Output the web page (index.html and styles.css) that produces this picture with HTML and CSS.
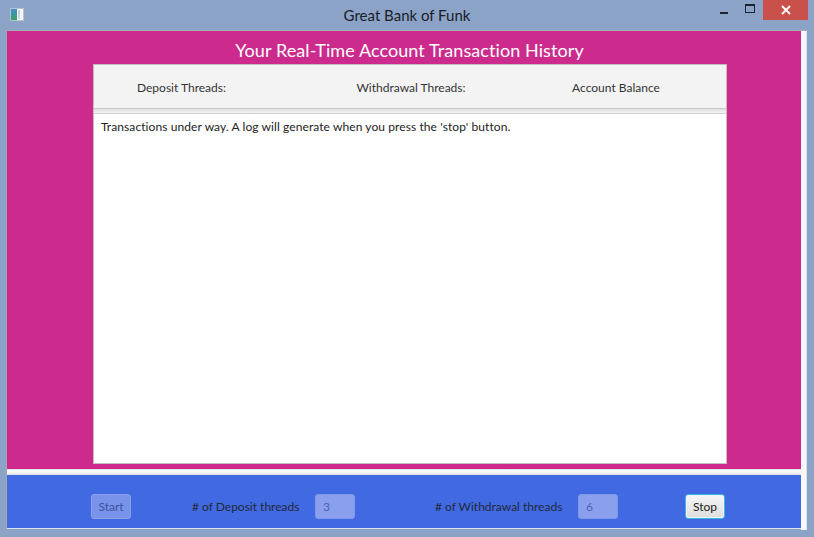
FILE: index.html
```html
<!DOCTYPE html>
<html>
<head>
<meta charset="utf-8">
<title>Great Bank of Funk</title>
<link rel="stylesheet" href="styles.css">
</head>
<body>
<div class="window">
  <div class="titlebar">
    <svg class="app-icon" width="14" height="13" viewBox="0 0 14 13">
      <rect x="0.5" y="0.5" width="13" height="12" fill="#f4f6f8" stroke="#b9c3cf"/>
      <defs><linearGradient id="g" x1="0" y1="0" x2="0" y2="1"><stop offset="0" stop-color="#3f8fd0"/><stop offset="1" stop-color="#3aa062"/></linearGradient></defs>
      <rect x="1" y="1" width="6" height="11" fill="url(#g)"/>
      <rect x="8" y="2" width="2" height="9" fill="#c9d1da"/>
    </svg>
    <div class="title">Great Bank of Funk</div>
    <div class="controls">
      <div class="ctl min"><span class="dash"></span></div>
      <div class="ctl max"><span class="box"></span></div>
      <div class="ctl close">
        <svg width="10" height="10" viewBox="0 0 10 10"><path d="M1 1 L9 9 M9 1 L1 9" stroke="#fff" stroke-width="1.8"/></svg>
      </div>
    </div>
  </div>
  <div class="client">
    <div class="scene">
      <div class="top-pane">
        <h1 class="heading">Your Real-Time Account Transaction History</h1>
        <div class="panel">
          <div class="header-row">
            <span class="hlabel">Deposit Threads:</span>
            <span class="hlabel">Withdrawal Threads:</span>
            <span class="hlabel">Account Balance</span>
          </div>
          <div class="divider"></div>
          <div class="log">Transactions under way. A log will generate when you press the 'stop' button.</div>
        </div>
      </div>
      <div class="split"></div>
      <div class="bottom-bar">
        <button class="btn disabled start">Start</button>
        <span class="flabel dep">&#35; of Deposit threads</span>
        <div class="field">3</div>
        <span class="flabel wd">&#35; of Withdrawal threads</span>
        <div class="field">6</div>
        <button class="btn stop">Stop</button>
      </div>
    </div>
    <div class="edge"></div>
  </div>
</div>
</body>
</html>
```
FILE: styles.css
```css
html, body {
  margin: 0;
  padding: 0;
}
body {
  width: 814px;
  height: 537px;
  overflow: hidden;
  font-family: "Segoe UI", Lato, "Open Sans", sans-serif;
}
.window {
  width: 814px;
  height: 537px;
  background: #8ba3c6;
  display: flex;
  flex-direction: column;
}
.titlebar {
  height: 30px;
  display: flex;
  align-items: flex-start;
  position: relative;
}
.app-icon {
  margin: 8px 0 0 10px;
}
.title {
  flex: 1;
  text-align: center;
  font-size: 15px;
  line-height: 30px;
  color: #1c1c28;
  padding-left: 79px;
}
.controls {
  display: flex;
  align-items: flex-start;
  margin-right: 6px;
}
.ctl {
  height: 20px;
  display: flex;
  align-items: center;
  justify-content: center;
}
.ctl.min {
  width: 26px;
}
.dash {
  width: 8px;
  height: 2px;
  background: #1c2233;
  margin-top: 5px;
}
.ctl.max {
  width: 26px;
}
.box {
  width: 8px;
  height: 6px;
  border: 1px solid #1c2233;
  border-top-width: 2px;
  margin-top: -4px;
}
.ctl.close {
  width: 45px;
  background: #c9504b;
}
.client {
  margin-left: 6px;
  width: 801px;
  height: 500px;
  display: flex;
  border-top: 1px solid #a7aab0;
  border-left: 1px solid #a2a6ad;
  box-sizing: border-box;
}
.scene {
  width: 795px;
  display: flex;
  flex-direction: column;
}
.edge {
  width: 5px;
  background: #f7f7f7;
  border-right: 1px solid #dfe3e8;
}
.top-pane {
  height: 438px;
  background: #cc2b8d;
  display: flex;
  flex-direction: column;
  align-items: flex-start;
}
.heading {
  margin: 0;
  width: 100%;
  text-align: center;
  font-weight: normal;
  font-size: 18px;
  letter-spacing: 0.08px;
  line-height: 24px;
  height: 33px;
  padding-top: 7px;
  padding-left: 11px;
  box-sizing: border-box;
  color: #fff;
}
.panel {
  margin-left: 86px;
  width: 634px;
  height: 400px;
  box-sizing: border-box;
  border: 1px solid #bfbfbf;
  background: #fff;
  display: flex;
  flex-direction: column;
}
.header-row {
  height: 43px;
  background: #f3f3f3;
  display: grid;
  grid-template-columns: 175px 284px 126px 1fr;
  align-items: center;
  font-size: 12px;
  color: #333;
}
.hlabel {
  text-align: center;
  white-space: nowrap;
  padding-top: 1px;
}
.divider {
  height: 4px;
  border-top: 1px solid #c8c8c8;
  border-bottom: 1px solid #d2d2d2;
  background: linear-gradient(#e2e2e2, #f1f1f1);
}
.log {
  flex: 1;
  padding: 5px 7px;
  font-size: 12px;
  letter-spacing: 0.09px;
  line-height: 16px;
  color: #222;
  white-space: nowrap;
}
.split {
  height: 6px;
  box-sizing: border-box;
  border-top: 1px solid #e0e0e0;
  background: linear-gradient(#ffffff, #f2f2f2 60%, #dcdcdc);
}
.bottom-bar {
  height: 54px;
  background: #4169e1;
  display: flex;
  align-items: flex-start;
  padding-top: 19px;
  box-sizing: border-box;
  border-bottom: 1px solid #dde2ea;
  font-size: 12px;
}
.btn {
  font-family: inherit;
  font-size: 12px;
  width: 40px;
  height: 25px;
  padding: 0;
  border-radius: 3px;
  box-sizing: border-box;
}
.btn.start {
  margin-left: 84px;
  background: #7a93ea;
  border: 1px solid #8ba1ee;
  color: #3c52a0;
}
.flabel {
  color: #222a3c;
  line-height: 25px;
  white-space: nowrap;
}
.flabel.dep {
  margin-left: 61px;
  width: 123px;
}
.flabel.wd {
  margin-left: 80px;
  width: 143px;
}
.field {
  width: 40px;
  height: 25px;
  box-sizing: border-box;
  background: #8aa0ec;
  border: 1px solid #7f97e9;
  border-radius: 3px;
  color: #4a60b2;
  line-height: 23px;
  padding-left: 7px;
}
.btn.stop {
  margin-left: 67px;
  background: linear-gradient(#f6f6f6, #dedede);
  border: 1px solid #3eb4de;
  box-shadow: inset 0 0 0 1px #e8f6fb;
  color: #222;
}
```
